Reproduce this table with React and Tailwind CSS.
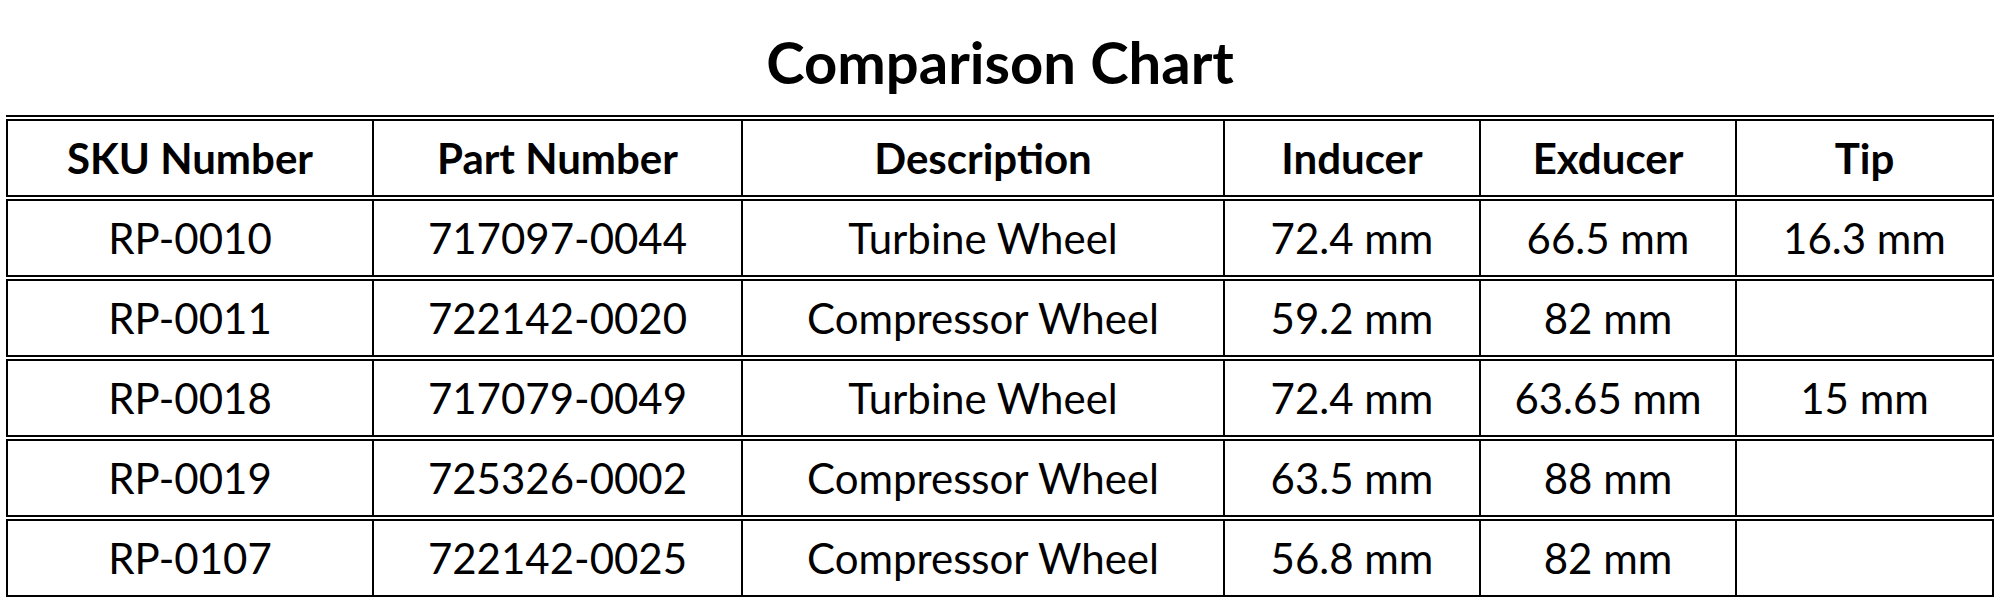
const COLS = [
  { label: 'SKU Number',  w: 'w-[367px]' },
  { label: 'Part Number', w: 'w-[369px]' },
  { label: 'Description', w: 'w-[482px]' },
  { label: 'Inducer',     w: 'w-[256px]' },
  { label: 'Exducer',     w: 'w-[256px]' },
  { label: 'Tip',         w: 'w-[258px]' },
]

const ROWS = [
  ['RP-0010', '717097-0044', 'Turbine Wheel',    '72.4 mm', '66.5 mm',  '16.3 mm'],
  ['RP-0011', '722142-0020', 'Compressor Wheel', '59.2 mm', '82 mm',    ''],
  ['RP-0018', '717079-0049', 'Turbine Wheel',    '72.4 mm', '63.65 mm', '15 mm'],
  ['RP-0019', '725326-0002', 'Compressor Wheel', '63.5 mm', '88 mm',    ''],
  ['RP-0107', '722142-0025', 'Compressor Wheel', '56.8 mm', '82 mm',    ''],
]

const cell = 'h-[78px] p-0 text-center align-middle border-y-2 border-x border-black first:border-l-2 last:border-r-2'

export default function App() {
  return (
    <div className="bg-white text-black font-['Lato',sans-serif] pl-[6px] pt-[33px] pb-[6px]">
      <h1 className="w-[1988px] text-center text-[58px] font-bold leading-none">Comparison Chart</h1>

      <table className="mt-[24px] w-[1988px] table-fixed border-separate border-spacing-x-0 border-spacing-y-[2px] border-t-2 border-black">
        <thead>
          <tr>
            {COLS.map(c => (
              <th key={c.label} className={`${cell} ${c.w} text-[42px] font-bold`}>{c.label}</th>
            ))}
          </tr>
        </thead>
        <tbody>
          {ROWS.map(r => (
            <tr key={r[0]}>
              {r.map((v, i) => (
                <td key={i} className={`${cell} text-[42px] font-normal`}>{v}</td>
              ))}
            </tr>
          ))}
        </tbody>
      </table>
    </div>
  )
}
